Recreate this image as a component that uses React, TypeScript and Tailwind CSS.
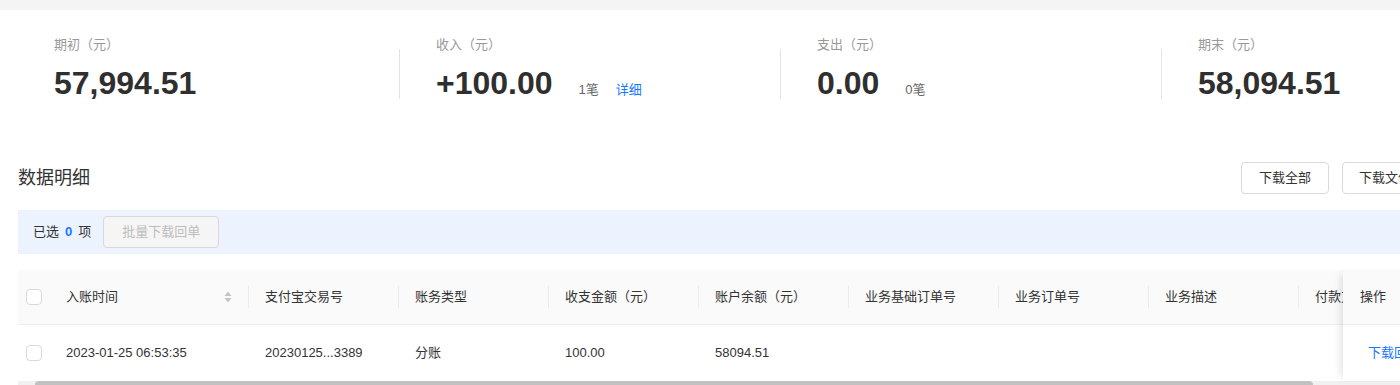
import React from "react";

const stats = [
  { label: "期初（元）", value: "57,994.51" },
  { label: "收入（元）", value: "+100.00", count: "1笔", link: "详细" },
  { label: "支出（元）", value: "0.00", count: "0笔" },
  { label: "期末（元）", value: "58,094.51" },
];

const columns = [
  { title: "入账时间", width: "w-[199px]", sort: true },
  { title: "支付宝交易号", width: "w-[150px]" },
  { title: "账务类型", width: "w-[150px]" },
  { title: "收支金额（元）", width: "w-[150px]" },
  { title: "账户余额（元）", width: "w-[150px]" },
  { title: "业务基础订单号", width: "w-[150px]" },
  { title: "业务订单号", width: "w-[150px]" },
  { title: "业务描述", width: "w-[150px]" },
  { title: "付款方", width: "w-[150px]" },
];

const row = ["2023-01-25 06:53:35", "20230125...3389", "分账", "100.00", "58094.51", "", "", "", ""];

function Checkbox() {
  return <span className="block h-4 w-4 rounded-sm border border-[#d9d9d9] bg-white" />;
}

function SortIcon() {
  return (
    <svg width="8" height="12" viewBox="0 0 8 12" className="shrink-0">
      <path d="M4 0.5 L7.5 5 H0.5 Z" fill="#c4c4c4" />
      <path d="M4 11.5 L7.5 7 H0.5 Z" fill="#c4c4c4" />
    </svg>
  );
}

export default function App() {
  return (
    <div className="h-[385px] w-[1400px] overflow-hidden bg-white font-['Liberation_Sans','Noto_Sans_CJK_SC',sans-serif] text-[13px] text-[#333] [text-spacing-trim:space-all] [font-feature-settings:'fwid'_1]">
      {/* top band */}
      <div className="h-[10px] bg-[#f4f4f4]" />

      {/* Stats */}
      <div className="ml-[18px] flex">
        {stats.map((s, i) => (
          <div key={s.label} className="flex w-[381px] shrink-0">
            {i > 0 && <div className="mt-[39px] h-[50px] w-px shrink-0 bg-[#e3e3e3]" />}
            <div className="pl-[36px] pt-[25px]">
              <div className="h-5 leading-5 text-[#999]">{s.label}</div>
              <div className="mt-[8px] flex items-baseline">
                <span className="text-[32px] font-bold leading-10 text-[#2f2f2f]">{s.value}</span>
                {s.count && <span className="ml-[26px] text-[#666]">{s.count}</span>}
                {s.link && <span className="ml-[17px] text-[#1677ff]">{s.link}</span>}
              </div>
            </div>
          </div>
        ))}
      </div>

      {/* Heading */}
      <div className="ml-[18px] mt-[59px] flex h-8 w-[1524px] items-center">
        <h2 className="text-[18px] font-normal text-[#333]">数据明细</h2>
        <div className="ml-auto flex gap-[13px]">
          <button className="h-8 w-[88px] rounded-sm border border-[#d9d9d9] bg-white text-[13px] text-[#333]">
            下载全部
          </button>
          <button className="h-8 w-[200px] rounded-sm border border-[#d9d9d9] bg-white pl-4 text-left text-[13px] text-[#333]">
            下载文件明细
          </button>
        </div>
      </div>

      {/* Selection bar */}
      <div className="ml-[18px] mt-4 flex h-11 w-[1524px] items-center bg-[#ecf3fe] pl-[15px]">
        <span>已选</span>
        <span className="mx-[6px] font-bold text-[#1677ff]">0</span>
        <span>项</span>
        <button
          disabled
          className="ml-[12px] h-8 w-[116px] cursor-not-allowed rounded-sm border border-[#d9d9d9] bg-[#f5f5f5] text-[13px] text-[#bdbdbd]"
        >
          批量下载回单
        </button>
      </div>

      {/* Table */}
      <div className="ml-[18px] mt-[16px] flex">
        <div className="w-[1325px] shrink-0 overflow-hidden">
          <div className="w-[1431px]">
            {/* header */}
            <div className="flex h-[55px] items-center border-b border-[#eeeeee] bg-[#fafafa]">
              <div className="flex w-8 shrink-0 pl-2">
                <Checkbox />
              </div>
              {columns.map((c) => (
                <div key={c.title} className={`flex ${c.width} shrink-0 items-center pl-4`}>
                  <span className="whitespace-nowrap">{c.title}</span>
                  {c.sort ? (
                    <>
                      <span className="ml-auto">
                        <SortIcon />
                      </span>
                      <span className="ml-[16px] h-[22px] w-px shrink-0 bg-[#ececec]" />
                    </>
                  ) : (
                    <span className="ml-auto h-[22px] w-px shrink-0 bg-[#ececec]" />
                  )}
                </div>
              ))}
            </div>
            {/* body */}
            <div className="flex h-[56px] items-center bg-white">
              <div className="flex w-8 shrink-0 pl-2">
                <Checkbox />
              </div>
              {columns.map((c, i) => (
                <div key={c.title} className={`${c.width} shrink-0 whitespace-nowrap pl-4`}>
                  {row[i]}
                </div>
              ))}
            </div>
          </div>
        </div>
        {/* fixed action column */}
        <div className="w-[120px] shrink-0 bg-white shadow-[-6px_0_8px_-4px_rgba(0,0,0,0.12)]">
          <div className="flex h-[55px] items-center border-b border-[#eeeeee] bg-[#fafafa] pl-[17px]">
            操作
          </div>
          <div className="flex h-[56px] items-center pl-[25px] text-[#1677ff]">下载回单</div>
        </div>
      </div>

      {/* scrollbar */}
      <div className="ml-[18px] flex h-2 w-[1524px] bg-[#f1f1f1]">
        <div className="ml-[17px] h-full w-[1278px] rounded-full bg-[#c1c1c1]" />
      </div>
    </div>
  );
}
